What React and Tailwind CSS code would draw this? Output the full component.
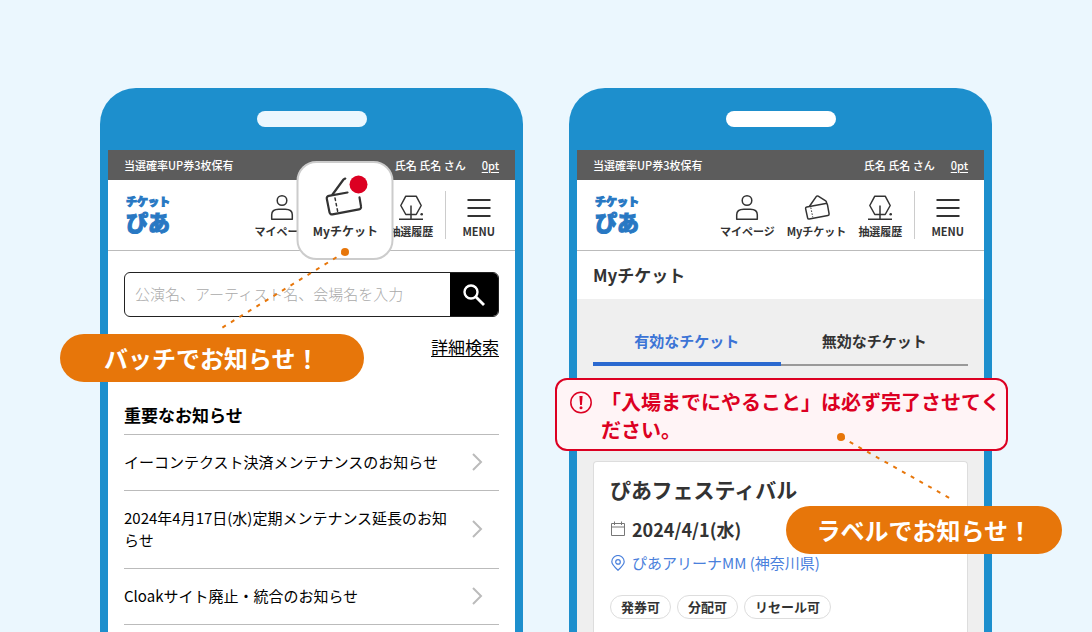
import clsx from "clsx";

const NEWS = [
    { id: 1, title: "イーコンテクスト決済メンテナンスのお知らせ" },
    { id: 2, title: "2024年4月17日(水)定期メンテナンス延長のお知らせ" },
    { id: 3, title: "Cloakサイト廃止・統合のお知らせ" },
];

const TAGS = ["発券可", "分配可", "リセール可"];

function UserIcon() {
    return (
        <svg className="h-7 w-7" viewBox="0 0 28 28" fill="none" stroke="#333" strokeWidth="1.5">
            <circle cx="14" cy="6.500" r="4.800" />
            <path d="M3.700 25.200v-4.400c0-4 3-5.600 7-5.600h6.600c4 0 7 1.600 7 5.600v4.400z" strokeLinejoin="round" />
        </svg>
    );
}

function TicketIcon() {
    return (
        <svg className="h-7 w-7" viewBox="0 0 28 28" fill="none" stroke="#333" strokeWidth="1.5" strokeLinejoin="round">
            <path d="M3.800 12.900 22.800 9.600a1.500 1.500 0 0 1 1.700 1.200l1.600 9a1.500 1.500 0 0 1-1.200 1.700L6.300 25a1.500 1.500 0 0 1-1.700-1.200L2.600 14.600a1.500 1.500 0 0 1 1.200-1.700z" />
            <path d="m6.500 12.200 6.700-9.600a1.500 1.500 0 0 1 2-.4l7.500 4.600a1.500 1.500 0 0 1 .7 1l.4 2" />
            <path d="m7.800 13.500 2 9.800" strokeWidth="1" strokeDasharray="1.500 1.500" />
        </svg>
    );
}

function LotteryIcon() {
    return (
        <svg className="h-7 w-7" viewBox="0 0 28 28" fill="none" stroke="#333" strokeWidth="1.5">
            <path d="M8.800 20.500 3.800 11.500l5-9.300h10.400l5 9.300-5 9z" strokeLinejoin="round" />
            <path d="M14 11.500v13.200M2 25.200h24" />
            <circle cx="24.700" cy="20.300" r="1.300" fill="#333" stroke="none" />
        </svg>
    );
}

function MenuIcon() {
    return (
        <svg className="h-7 w-7" viewBox="0 0 28 28" fill="none" stroke="#333" strokeWidth="2">
            <path d="M2.500 6h23M2.500 14h23M2.500 22h23" />
        </svg>
    );
}

function Logo() {
    return (
        <a
            href="#top"
            className="ml-0.5 flex flex-col pb-1 font-black text-[#2878c3] [-webkit-text-stroke:1px_#2878c3]"
        >
            <span className="text-[11px] leading-4">チケット</span>
            <span className="text-[22px] leading-6">ぴあ</span>
        </a>
    );
}

function NavItem({ icon, label }) {
    return (
        <button type="button" className="flex flex-col items-center gap-px whitespace-nowrap text-[11px] leading-4 font-bold text-[#333]">
            {icon}
            {label}
        </button>
    );
}

// Enlarged "My Ticket" button that pops out of the nav bar, with its red badge
function TicketPopup() {
    return (
        <div className="relative h-12 w-14">
            <button
                type="button"
                className="absolute -top-[30px] left-6 z-10 flex h-[99px] w-[97px] -translate-x-1/2 flex-col items-center justify-center gap-1 rounded-[20px] border-2 border-[#ccc] bg-white pb-2 text-xs font-bold text-[#333]"
            >
                <svg className="h-11 w-14" viewBox="0 0 56 44" fill="none" stroke="#333" strokeWidth="2.200" strokeLinecap="round" strokeLinejoin="round">
                    <path d="M30 17.500 11.300 20.800a2.500 2.500 0 0 0-2 3l2.700 13.600a2.500 2.500 0 0 0 3 2l26.500-5a2.500 2.500 0 0 0 2-3l-1.500-9" />
                    <path d="M15 19.500 26 4.500l1.800-.9" />
                    <path d="m17.500 23 2.700 13.500" strokeWidth="1.500" strokeDasharray="2.500 3" />
                    <circle cx="41" cy="9.500" r="9" fill="#dc0022" stroke="none" />
                </svg>
                Myチケット
            </button>
            <svg className="absolute top-14 right-7 z-20 h-[84px] w-[132px]" viewBox="0 0 132 84" fill="none">
                <path d="M128 5 3 82" stroke="#e7760a" strokeWidth="2" strokeDasharray="4 6" />
                <circle cx="128" cy="5" r="4" fill="#e7760a" />
            </svg>
        </div>
    );
}

function SiteHeader({ popup }) {
    return (
        <header>
            <div className="flex h-[30px] items-center bg-[#5c5c5c] px-4 text-[11px] font-medium text-white">
                <span className="grow">当選確率UP券3枚保有</span>
                <span>氏名 氏名 さん</span>
                <a href="#point" className="ml-4 underline underline-offset-2">0pt</a>
            </div>
            <div className="flex h-[71px] items-center border-b border-[#bbb] bg-white px-4">
                <Logo />
                <nav className="mr-1 flex grow items-end justify-end gap-3">
                    <NavItem icon={<UserIcon />} label="マイページ" />
                    {popup ? <TicketPopup /> : <NavItem icon={<TicketIcon />} label="Myチケット" />}
                    <NavItem icon={<LotteryIcon />} label="抽選履歴" />
                    <span className="mr-1 h-12 w-px bg-[#ccc]" />
                    <NavItem icon={<MenuIcon />} label="MENU" />
                </nav>
            </div>
        </header>
    );
}

function Phone({ notchClassName, screenClassName, popup, children }) {
    return (
        <section className="relative flex w-full max-w-[423px] flex-col rounded-t-[36px] bg-[#1d8fcd] px-2">
            <div className="flex h-[62px] shrink-0 items-center justify-center">
                <span className={clsx("h-4 w-[110px] rounded-full", notchClassName)} />
            </div>
            <div className={clsx("grow", screenClassName)}>
                <SiteHeader popup={popup} />
                {children}
            </div>
        </section>
    );
}

function HomeScreen() {
    return (
        <div className="px-4 pt-[21px]">
            <form className="flex h-[45px] overflow-hidden rounded-md border border-[#222]">
                <input
                    type="text"
                    aria-label="キーワード"
                    placeholder="公演名、アーティスト名、会場名を入力"
                    className="min-w-0 grow px-[10px] text-[15px] font-light outline-none placeholder:text-[#aaa]"
                />
                <button type="button" aria-label="検索" className="flex w-12 shrink-0 items-center justify-center bg-black">
                    <svg className="h-6 w-6" viewBox="0 0 24 24" fill="none" stroke="#fff" strokeWidth="2.400">
                        <circle cx="9" cy="9" r="6.500" />
                        <path d="m14 14 8 8" strokeWidth="2.800" />
                    </svg>
                </button>
            </form>
            <div className="mt-4 text-right text-[17px] leading-7">
                <a href="#search" className="underline underline-offset-2">詳細検索</a>
            </div>
            <h2 className="mt-10 border-b border-[#bbb] pb-[5px] text-[17px] leading-7 font-bold">重要なお知らせ</h2>
            <ul>
                {NEWS.map((item) => (
                    <li key={item.id} className="border-b border-[#bbb]">
                        <a href="#news" className="flex items-center gap-5 pt-4 pr-4 pb-[17px] text-[15px] leading-[22px]">
                            <span className="grow">{item.title}</span>
                            <svg className="h-5 w-3 shrink-0" viewBox="0 0 12 20" fill="none" stroke="#bbb" strokeWidth="2">
                                <path d="m2 2 8 8-8 8" />
                            </svg>
                        </a>
                    </li>
                ))}
            </ul>
        </div>
    );
}

function TicketScreen() {
    return (
        <>
            <h1 className="bg-white px-4 py-3 text-[17px] leading-6 font-bold">Myチケット</h1>
            <div className="px-4 pt-5">
                <div role="tablist" className="flex text-[15px] leading-6 font-bold">
                    <button type="button" role="tab" aria-selected="true" className="h-[47px] flex-1 border-b-4 border-[#2a69d0] text-[#3c74d6]">
                        有効なチケット
                    </button>
                    <button type="button" role="tab" aria-selected="false" className="h-[47px] flex-1 border-b-2 border-[#999] pb-0.5">
                        無効なチケット
                    </button>
                </div>
                <div role="alert" className="-mr-10 -ml-[38px] mt-3 flex items-start gap-2 rounded-xl border-2 border-[#dc0022] bg-[#fff4f6] pt-2 pb-[5px] pl-3 text-xl leading-7 font-bold text-[#dc0022]">
                    <svg className="mt-0.5 h-6 w-6 shrink-0" viewBox="0 0 24 24" fill="none" stroke="#dc0022" strokeWidth="1.500">
                        <circle cx="12" cy="12.500" r="10.200" />
                        <path d="M10.400 6h3.200l-.7 9h-1.800z" fill="#dc0022" stroke="none" />
                        <circle cx="12" cy="17.800" r="1.500" fill="#dc0022" stroke="none" />
                    </svg>
                    <p>「入場までにやること」は必ず完了させてください。</p>
                </div>
                <article className="mt-[10px] rounded-t border border-b-0 border-[#ddd] bg-white px-4 pt-[11px] pb-6">
                    <h2 className="text-[21px] leading-8 font-bold">ぴあフェスティバル</h2>
                    <p className="mt-[10px] flex items-center gap-1.5 text-lg leading-7 font-bold">
                        <svg className="h-4 w-4" viewBox="0 0 16 16" fill="none" stroke="#777" strokeWidth="1">
                            <path d="M1.500 2.500h13v12h-13zM1.500 6h13M4.500.5v3.500M11.500.5v3.500" />
                        </svg>
                        2024/4/1(水)
                    </p>
                    <a href="#venue" className="mt-2 flex items-center gap-1.5 text-[15px] leading-6 text-[#4a80dc]">
                        <svg className="h-4 w-4" viewBox="0 0 16 16" fill="none" stroke="#4a80dc" strokeWidth="1.200">
                            <path d="M8 15.200C4 11.500 1.800 9.200 1.800 6.700a6.200 6.200 0 0 1 12.400 0c0 2.500-2.200 4.800-6.200 8.500z" />
                            <circle cx="8" cy="6.900" r="2.300" />
                        </svg>
                        ぴあアリーナMM (神奈川県)
                    </a>
                    <ul className="mt-5 flex gap-1.5 text-[13px] leading-[22px] font-bold">
                        {TAGS.map((tag) => (
                            <li key={tag} className="rounded-full border border-[#ddd] px-[10px]">{tag}</li>
                        ))}
                    </ul>
                </article>
            </div>
        </>
    );
}

function Callout({ className, children }) {
    return (
        <p className={clsx("absolute z-20 rounded-full bg-[#e7760a] py-2 text-2xl leading-8 font-bold whitespace-nowrap text-white", className)}>
            {children}
        </p>
    );
}

export default function App() {
    return (
        <main
            lang="ja"
            className="flex h-screen justify-center gap-[46px] overflow-hidden bg-[#ebf7fe] px-[100px] pt-[88px] font-['Noto_Sans_CJK_JP',sans-serif] text-black"
        >
            <Phone popup notchClassName="bg-[#ebf7fe]" screenClassName="bg-white">
                <HomeScreen />
                <Callout className="top-[246px] -left-10 px-11">バッチでお知らせ！</Callout>
            </Phone>
            <Phone notchClassName="bg-white" screenClassName="bg-[#efefef] text-[#333]">
                <TicketScreen />
                <svg className="absolute top-[344px] right-[36px] z-20 h-[74px] w-[120px]" viewBox="0 0 120 74" fill="none">
                    <path d="M5 5 117 68" stroke="#e7760a" strokeWidth="2" strokeDasharray="4 6" />
                    <circle cx="5" cy="5" r="4" fill="#e7760a" />
                </svg>
                <Callout className="top-[418px] -right-[70px] px-[30px]">ラベルでお知らせ！</Callout>
            </Phone>
        </main>
    );
}
